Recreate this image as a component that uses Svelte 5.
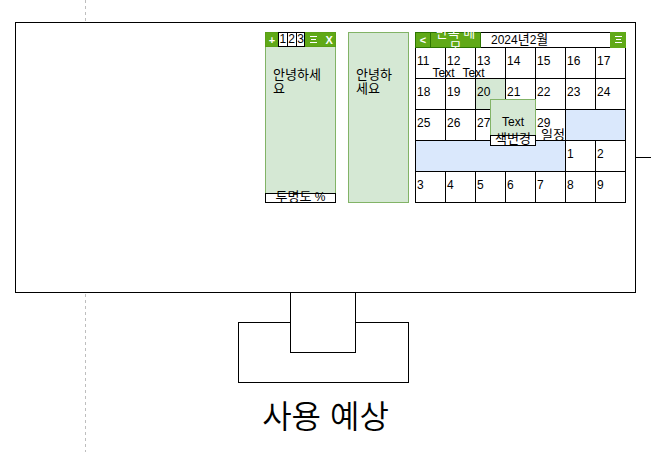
<script>
  const weeks = [
    [{ day: 11, note: 'Text' }, { day: 12, note: 'Text' }, { day: 13 }, { day: 14 }, { day: 15 }, { day: 16 }, { day: 17 }],
    [{ day: 18 }, { day: 19 }, { day: 20, picked: true }, { day: 21 }, { day: 22 }, { day: 23 }, { day: 24 }],
    [{ day: 25 }, { day: 26 }, { day: 27 }, { day: '' }, { day: 29, note: '일정' }, { span: 2 }],
    [{ span: 5 }, { day: 1 }, { day: 2 }],
    [{ day: 3 }, { day: 4 }, { day: 5 }, { day: 6 }, { day: 7 }, { day: 8 }, { day: 9 }]
  ];
</script>

{#snippet menuIcon()}
  <svg width="7" height="8" viewBox="0 0 7 8" aria-hidden="true">
    <path d="M0 .5h7M1 3.5h5M0 6.5h7" stroke="#fff" fill="none" />
  </svg>
{/snippet}

<main>
  <div class="guide"></div>
  <div class="connector"></div>
  <section class="monitor">
    <article class="memo">
      <header>
        <button class="green symbol" aria-label="add">+</button>
        <button class="page">1</button><button class="page">2</button><button class="page">3</button>
        <button class="green menu" aria-label="menu">{@render menuIcon()}</button>
        <button class="green symbol">X</button>
      </header>
      <p class="ko">안녕하세요</p>
      <footer><span class="ko">투명도</span> %</footer>
    </article>

    <article class="memo plain">
      <p class="ko">안녕하세요</p>
    </article>

    <div class="calendar">
      <header>
        <button class="green symbol">&lt;</button>
        <button class="green repeat ko">반복 메모</button>
        <h2>2024<span class="ko">년</span>2<span class="ko">월</span></h2>
        <button class="green" aria-label="menu">{@render menuIcon()}</button>
      </header>
      <table>
        <tbody>
          {#each weeks as week}
            <tr>
              {#each week as cell}
                {#if cell.span}
                  <td class="blue" colspan={cell.span}></td>
                {:else}
                  <td class:picked={cell.picked}>
                    {cell.day}
                    {#if cell.note}<span class="note" class:ko={cell.note === '일정'}>{cell.note}</span>{/if}
                  </td>
                {/if}
              {/each}
            </tr>
          {/each}
        </tbody>
      </table>
      <div class="popup">
        <div class="text">Text</div>
        <button class="recolor ko">색변경</button>
      </div>
    </div>
  </section>

  <div class="stand">
    <div class="neck"></div>
    <div class="base"></div>
  </div>
  <h1>사용 예상</h1>
</main>

<style>
  :global(body) { margin: 0; background: #fff; }
  main {
    position: relative;
    box-sizing: border-box;
    min-height: 100vh;
    padding: 22px 15px 0;
    overflow: hidden;
    font: 12px/14px "Liberation Sans", "Noto Sans CJK KR", sans-serif;
    color: #000;
  }
  main :global(*) { box-sizing: border-box; }
  button {
    margin: 0;
    padding: 0;
    border: 0;
    background: none;
    font: inherit;
    color: inherit;
  }
  .ko { font-size: 13px; }
  .guide {
    position: absolute;
    top: 0;
    bottom: 0;
    left: 85px;
    width: 1px;
    background: repeating-linear-gradient(#bebebe 0 3px, transparent 3px 6px);
  }
  .connector {
    position: absolute;
    top: 157px;
    right: 0;
    width: 15px;
    height: 1px;
    background: #000;
  }
  .monitor {
    position: relative;
    display: flex;
    justify-content: flex-end;
    align-items: flex-start;
    height: 271px;
    padding: 9px;
    border: 1px solid #000;
    background: #fff;
  }
  .memo {
    display: flex;
    flex-direction: column;
    width: 71px;
    height: 171px;
    margin-right: 12px;
    border: 1px solid #82b366;
    background: #d5e8d4;
  }
  .plain { width: 61px; margin-right: 6px; }
  .memo header {
    display: flex;
    height: 15px;
    margin: -1px -1px 0;
    background: #60a917;
    border: 1px solid #5a9e16;
  }
  .memo header button { height: 15px; margin-top: -1px; }
  .green {
    display: flex;
    align-items: center;
    justify-content: center;
    width: 15px;
    background: #60a917;
    color: #fff;
  }
  .symbol { font-size: 11px; font-weight: bold; }
  .memo .green { width: 12px; background: none; }
  .memo .menu { width: 19px; }
  .page {
    width: 10px;
    margin-right: -1px;
    border: 1px solid #000;
    background: #fff;
    line-height: 13px;
  }
  .memo p {
    flex: 1;
    margin: 0;
    padding: 21px 7px 0;
    word-break: break-all;
  }
  .plain p { padding-top: 35px; }
  .memo footer {
    height: 10px;
    margin: 0 -1px -1px;
    border: 1px solid #000;
    background: #fff;
    line-height: 6px;
    text-align: center;
  }
  .calendar { position: relative; width: 211px; }
  .calendar header {
    display: flex;
    height: 16px;
    border: 1px solid #000;
  }
  .calendar .green {
    height: 16px;
    margin-top: -1px;
    border: 1px solid #2d7600;
  }
  .calendar .green:first-child { margin-left: -1px; width: 15px; border-right: 0; }
  .calendar .green:last-child { margin-right: -1px; width: 16px; border-color: #60a917; }
  .calendar .repeat { width: 51px; line-height: 14px; }
  h2 {
    flex: 1;
    margin: 0;
    padding-left: 10px;
    font: inherit;
  }
  table {
    width: 100%;
    table-layout: fixed;
    border-spacing: 0;
    border-left: 1px solid #000;
  }
  td {
    position: relative;
    height: 31px;
    padding: 6px 0 0 1px;
    border: solid #000;
    border-width: 0 1px 1px 0;
    vertical-align: top;
    white-space: nowrap;
  }
  .blue { background: #dae8fc; }
  .picked { background: #d5e8d4; }
  .note {
    position: absolute;
    z-index: 1;
    top: 18px;
    left: 50%;
    margin-left: 2px;
  }
  .note.ko { left: 3px; }
  .popup {
    position: absolute;
    z-index: 2;
    top: 67px;
    left: 75px;
    width: 46px;
  }
  .popup .text {
    height: 36px;
    border: 1px solid #82b366;
    border-bottom: 0;
    background: #d5e8d4;
    line-height: 44px;
    text-align: center;
  }
  .recolor {
    display: flex;
    justify-content: center;
    width: 100%;
    height: 11px;
    border: 1px solid #000;
    background: #fff;
    line-height: 6px;
  }
  .stand {
    display: flex;
    flex-direction: column;
    align-items: center;
    margin-top: -1px;
    padding-right: 5px;
  }
  .neck {
    position: relative;
    z-index: 1;
    width: 66px;
    height: 61px;
    border: 1px solid #000;
    background: #fff;
  }
  .base {
    width: 171px;
    height: 61px;
    margin-top: -31px;
    border: 1px solid #000;
  }
  h1 {
    margin: 10px 0 0;
    font: 350 32px/48px "Liberation Sans", "Noto Sans CJK KR", sans-serif;
    text-align: center;
  }
</style>
